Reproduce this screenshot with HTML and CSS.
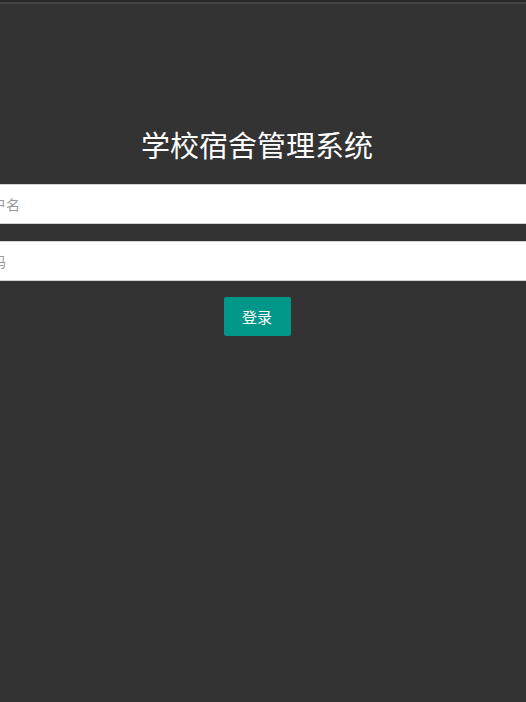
FILE: index.html
```html
<!DOCTYPE html>
<html lang="zh">
<head>
<meta charset="utf-8">
<title>学校宿舍管理系统</title>
<link rel="stylesheet" href="styles.css">
</head>
<body>
<div class="topline"></div>
<div class="login">
  <h1 class="title">学校宿舍管理系统</h1>
  <form class="form">
    <input class="field" type="text" placeholder="用户名">
    <input class="field" type="password" placeholder="密码">
    <div class="actions"><button class="btn" type="button">登录</button></div>
  </form>
</div>
</body>
</html>
```

FILE: styles.css
```css
html, body {
  margin: 0;
  padding: 0;
  background: #333333;
  overflow: hidden;
}
body {
  font-family: "Noto Sans CJK SC", "Noto Sans", sans-serif;
  height: 702px;
}
.topline {
  height: 2px;
  background: #2a2a2a;
  border-bottom: 2px solid #444444;
}
.login {
  width: 582px;
  margin-left: -33px;
  padding-top: 120px;
}
.title {
  margin: 0 2px 0 0;
  text-align: center;
  color: #ffffff;
  font-weight: 400;
  font-size: 29px;
  line-height: 40px;
}
.form {
  margin-top: 20px;
  display: flex;
  flex-direction: column;
  gap: 17px;
}
.field {
  display: block;
  box-sizing: border-box;
  width: 100%;
  height: 40px;
  margin: 0;
  padding: 0 10px;
  border: 1px solid #d2d2d2;
  border-radius: 2px;
  background: #ffffff;
  font-family: inherit;
  font-size: 14px;
  color: #333;
  outline: none;
}
.field::placeholder {
  color: #9a9a9a;
}
.actions {
  display: flex;
  justify-content: center;
  margin: -1px 2px 0 0;
}
.btn {
  width: 67px;
  height: 39px;
  border: none;
  border-radius: 2px;
  background: #009688;
  color: #ffffff;
  font-family: inherit;
  font-size: 15px;
  padding: 0;
  cursor: pointer;
}
```
